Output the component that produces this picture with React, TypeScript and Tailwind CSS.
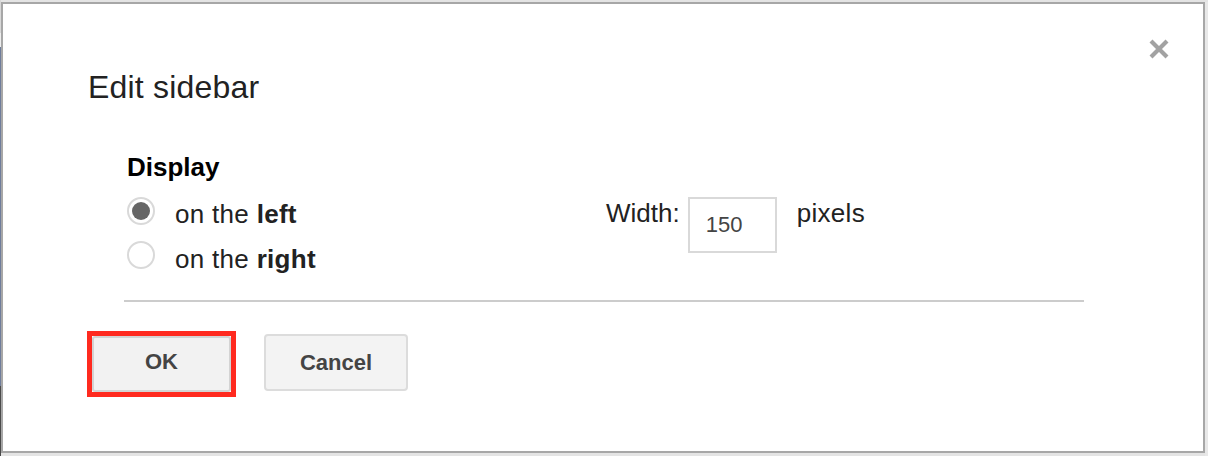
import React from "react";

function Radio({ checked }: { checked: boolean }) {
  return (
    <div className="mt-[5px] flex h-[28px] w-[28px] shrink-0 items-center justify-center rounded-full border-2 border-[#d9d9d9] bg-white">
      {checked && <div className="h-[18px] w-[18px] rounded-full bg-[#666666]" />}
    </div>
  );
}

export default function App() {
  return (
    <div
      className="flex h-[456px] w-[1208px] overflow-hidden bg-[#e4e4e4] pt-[2px]"
      style={{ fontFamily: '"Liberation Sans", Arial, sans-serif' }}
    >
      <div className="-mt-[2px] flex h-[456px] w-[1px] shrink-0 flex-col">
        <div className="h-[33px] bg-[#d8d8d8]" />
        <div className="h-[14px] bg-[#eeeeee]" />
        <div className="flex-1 bg-[#6f7d9b]" />
        <div className="h-[70px] bg-[#4a4a4a]" />
      </div>
      <div className="relative h-[451px] w-[1204px] shrink-0 border-2 border-[#a7a7a7] bg-white text-[#222222]">
        <button className="absolute left-[1145px] top-[34px] flex h-[22px] w-[22px] items-center justify-center">
          <svg width="22" height="22" viewBox="0 0 22 22">
            <path d="M3 3 L19 19 M19 3 L3 19" stroke="#a2a2a2" strokeWidth="4.2" strokeLinecap="butt" />
          </svg>
        </button>

        <div className="pl-[85px] pt-[67px] text-[32px] leading-[32px] tracking-[0.2px]">Edit sidebar</div>

        <div className="mt-[42px] flex pl-[124px]">
          <div className="flex w-[479px] flex-col">
            <div className="h-[44px] text-[26px] font-bold leading-[44px] text-black">Display</div>
            <div className="mt-[3px] flex h-[44px] items-start">
              <Radio checked />
              <div className="ml-[20px] text-[26px] leading-[44px] tracking-[0.3px]">
                on the <b>left</b>
              </div>
            </div>
            <div className="flex h-[44px] items-start">
              <Radio checked={false} />
              <div className="ml-[20px] mt-[1px] text-[26px] leading-[44px] tracking-[0.3px]">
                on the <b>right</b>
              </div>
            </div>
          </div>
          <div className="mt-[46px] flex items-start">
            <div className="text-[26px] leading-[44px]">Width:</div>
            <div className="ml-[8px] mt-[6px] h-[56px] w-[89px] border-2 border-[#d9d9d9] pl-[16px] text-[22px] leading-[52px] text-[#444444]">
              150
            </div>
            <div className="ml-[20px] text-[26px] leading-[44px] tracking-[0.3px]">pixels</div>
          </div>
        </div>

        <div className="ml-[121px] mt-[20px] h-[2px] w-[960px] bg-[#cccccc]" />

        <div className="mt-[29px] flex items-start pl-[84px]">
          <div className="border-[5px] border-[#ff2a1f]">
            <button className="flex h-[56px] w-[139px] items-center justify-center rounded-[3px] border-2 border-[#d3d3d3] bg-[#f2f2f2] pb-[5px] text-[22px] font-bold text-[#444444]">
              OK
            </button>
          </div>
          <button className="ml-[28px] mt-[3px] flex h-[57px] w-[144px] items-center justify-center rounded-[4px] border-2 border-[#dcdcdc] bg-[#f3f3f3] text-[22px] font-bold text-[#444444]">
            Cancel
          </button>
        </div>
      </div>
      <div className="flex-1 bg-[#e8e8e8]" />
    </div>
  );
}
